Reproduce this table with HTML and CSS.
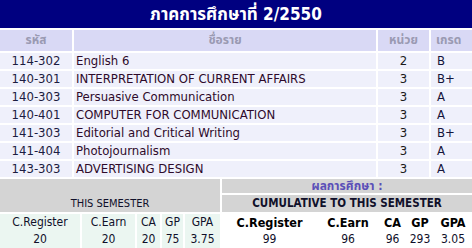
FILE: index.html
```html
<!DOCTYPE html>
<html lang="th">
<head>
<meta charset="utf-8">
<title>ภาคการศึกษาที่ 2/2550</title>
<link rel="stylesheet" href="styles.css">
</head>
<body>
<div class="page">
  <div class="title">ภาคการศึกษาที่ 2/2550</div>
  <div class="courses">
    <div class="hd">รหัส</div><div class="hd">ชื่อราย</div><div class="hd">หน่วย</div><div class="hd grade-h">เกรด</div>

    <div class="cell code">114-302</div><div class="cell name">English 6</div><div class="cell unit">2</div><div class="cell grade">B</div>
    <div class="cell code">140-301</div><div class="cell name">INTERPRETATION OF CURRENT AFFAIRS</div><div class="cell unit">3</div><div class="cell grade">B+</div>
    <div class="cell code">140-303</div><div class="cell name">Persuasive Communication</div><div class="cell unit">3</div><div class="cell grade">A</div>
    <div class="cell code">140-401</div><div class="cell name">COMPUTER FOR COMMUNICATION</div><div class="cell unit">3</div><div class="cell grade">A</div>
    <div class="cell code">141-303</div><div class="cell name">Editorial and Critical Writing</div><div class="cell unit">3</div><div class="cell grade">B+</div>
    <div class="cell code">141-404</div><div class="cell name">Photojournalism</div><div class="cell unit">3</div><div class="cell grade">A</div>
    <div class="cell code">143-303</div><div class="cell name">ADVERTISING DESIGN</div><div class="cell unit">3</div><div class="cell grade">A</div>
  </div>

  <div class="summary">
    <div class="sem-head">THIS SEMESTER</div>
    <div class="cum-head">
      <div class="result-label">ผลการศึกษา :</div>
      <div class="cum-title">CUMULATIVE TO THIS SEMESTER</div>
    </div>
    <div class="stats stats-sem">
      <div class="stat"><span>C.Register</span><span>20</span></div>
      <div class="stat"><span>C.Earn</span><span>20</span></div>
      <div class="stat"><span>CA</span><span>20</span></div>
      <div class="stat"><span>GP</span><span>75</span></div>
      <div class="stat"><span>GPA</span><span>3.75</span></div>
    </div>
    <div class="stats stats-cum">
      <div class="stat"><span class="lbl">C.Register</span><span>99</span></div>
      <div class="stat"><span class="lbl">C.Earn</span><span>96</span></div>
      <div class="stat"><span class="lbl">CA</span><span>96</span></div>
      <div class="stat"><span class="lbl">GP</span><span>293</span></div>
      <div class="stat"><span class="lbl">GPA</span><span>3.05</span></div>
    </div>
  </div>
</div>
</body>
</html>
```

FILE: styles.css
```css
html, body {
  margin: 0;
  padding: 0;
  background: #ffffff;
}

body {
  font-family: "DejaVu Sans Condensed", "DejaVu Sans", "Noto Sans Thai", Tahoma, sans-serif;
  font-size: 13px;
  color: #1a1a3a;
}

.page {
  width: 472px;
}

.title {
  height: 28px;
  line-height: 28px;
  background: #000080;
  color: #ffffff;
  font-weight: bold;
  font-size: 17px;
  text-align: center;
  margin-bottom: 2px;
}

.courses {
  display: grid;
  grid-template-columns: 72px 302px 51px 41px;
  grid-auto-rows: 16px;
  grid-template-rows: 21px;
  gap: 2px;
}

.hd {
  background: #d9d9f5;
  color: #9a9ab2;
  font-weight: bold;
  font-size: 12px;
  line-height: 21px;
  text-align: center;
}

.grade-h {
  text-align: left;
  padding-left: 5px;
}

.cell {
  background: #eff0fb;
  line-height: 16px;
  white-space: nowrap;
}

.code {
  text-align: center;
  color: #1c1c40;
}

.name {
  padding-left: 2px;
  color: #2e0a2a;
}

.unit {
  text-align: center;
  color: #1a1a1a;
}

.grade {
  padding-left: 6px;
  color: #14143a;
}

.summary {
  display: grid;
  grid-template-columns: 220px 250px;
  gap: 2px;
  margin-top: 2px;
}

.sem-head {
  background: #d4d4d4;
  display: flex;
  align-items: flex-end;
  justify-content: center;
  font-size: 11px;
  line-height: 17px;
  color: #10102a;
}

.cum-head {
  display: flex;
  flex-direction: column;
  gap: 2px;
}

.result-label {
  background: #d4d4d4;
  height: 14px;
  line-height: 14px;
  text-align: center;
  color: #5a4fb8;
  font-weight: bold;
  font-size: 12px;
}

.cum-title {
  background: #d4d4d4;
  height: 17px;
  line-height: 17px;
  text-align: center;
  font-weight: bold;
  font-size: 11.5px;
  color: #10102a;
}

.stats {
  display: grid;
  gap: 2px;
}

.stats-sem {
  grid-template-columns: 80px 53px 23px 21px 35px;
}

.stats-cum {
  grid-template-columns: 95px 58px 27px 24px 38px;
}

.stat {
  display: flex;
  flex-direction: column;
  align-items: center;
  height: 34px;
  font-size: 12px;
  line-height: 17px;
  white-space: nowrap;
}

.stats-sem .stat {
  background: #ebf6f1;
  color: #10102a;
}

.stats-cum .stat {
  background: #ffffff;
  color: #10102a;
}

.lbl {
  font-weight: bold;
  font-size: 12.5px;
  color: #000000;
}
```
